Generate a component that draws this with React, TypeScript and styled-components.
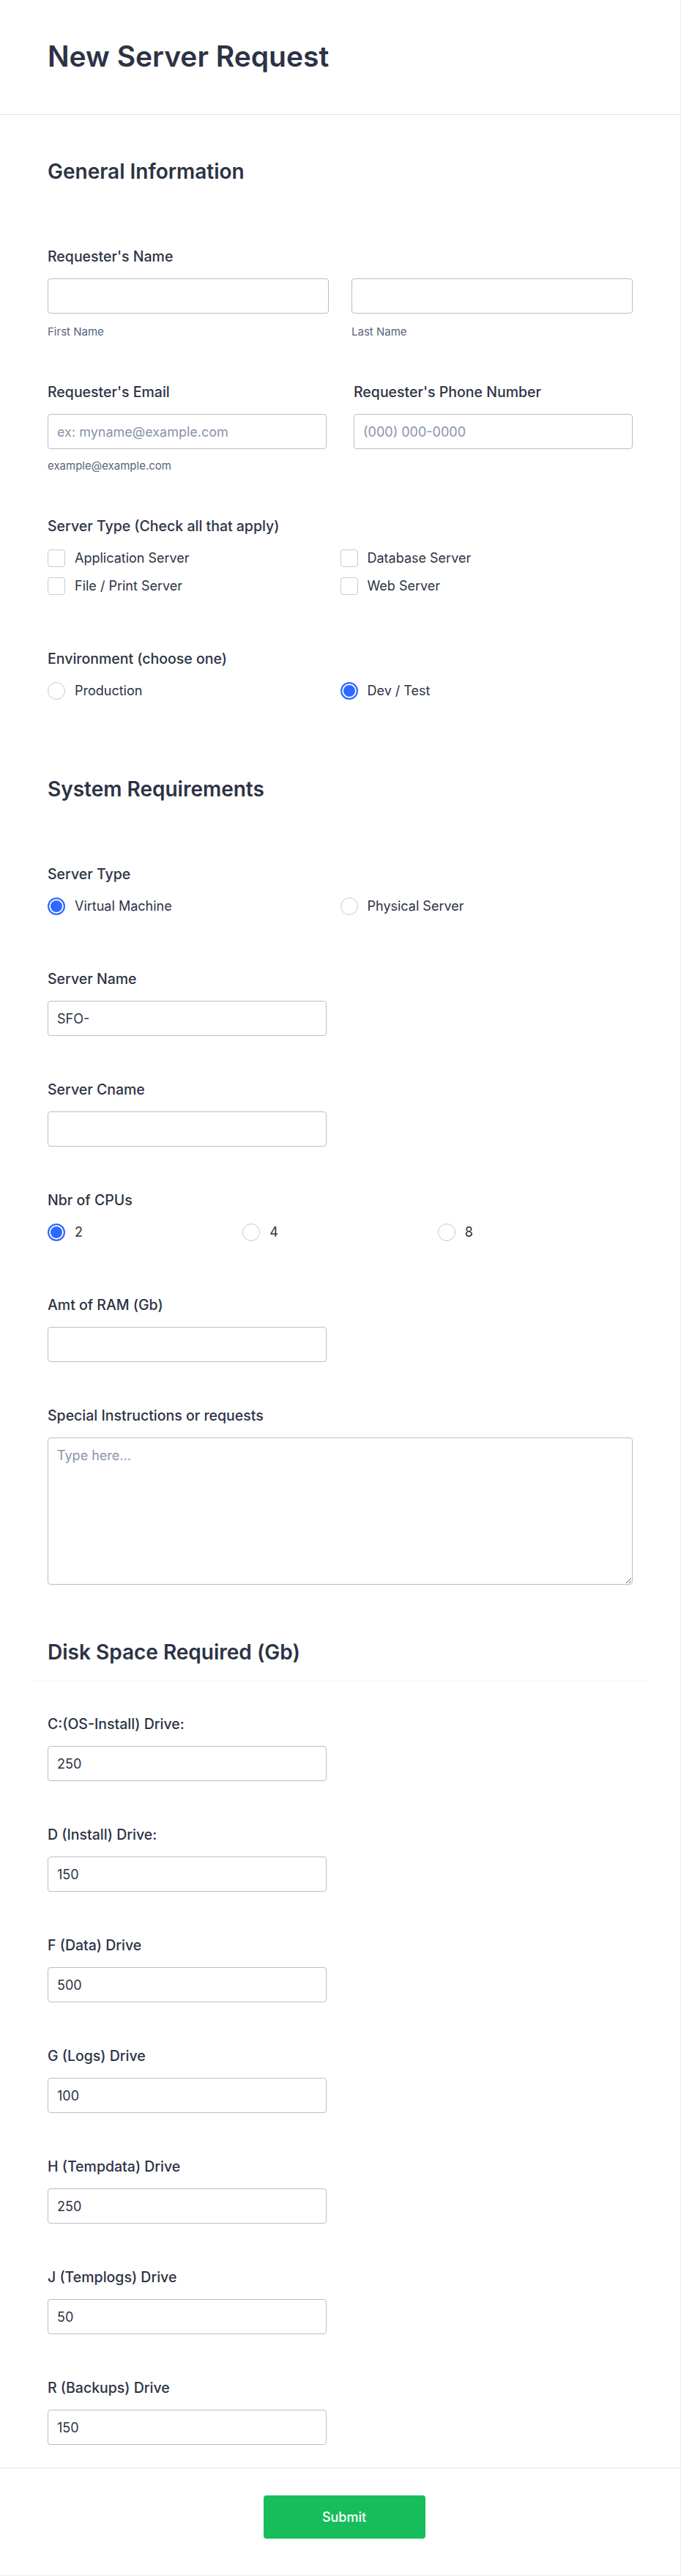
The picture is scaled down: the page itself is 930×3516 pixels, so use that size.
import React from 'react';
import styled, { createGlobalStyle, css } from 'styled-components';

const GlobalStyle = createGlobalStyle`
  * { box-sizing: border-box; }
  body {
    margin: 0;
    background: #ffffff;
    font-family: Inter, "Noto Sans", "Liberation Sans", sans-serif;
    color: #2c3345;
  }
`;

const drives = [
  { label: 'C:(OS-Install) Drive:', value: '250' },
  { label: 'D (Install) Drive:', value: '150' },
  { label: 'F (Data) Drive', value: '500' },
  { label: 'G (Logs) Drive', value: '100' },
  { label: 'H (Tempdata) Drive', value: '250' },
  { label: 'J (Templogs) Drive', value: '50' },
  { label: 'R (Backups) Drive', value: '150' },
];

function Check({ label }: { label: string }) {
  return (
    <Option>
      <CheckBox />
      <OptionText>{label}</OptionText>
    </Option>
  );
}

function Radio({ label, checked }: { label: string; checked?: boolean }) {
  return (
    <Option>
      <RadioDot $checked={!!checked} />
      <OptionText>{label}</OptionText>
    </Option>
  );
}

export default function App() {
  return (
    <>
      <GlobalStyle />
      <Page>
        <Header>
          <Title>New Server Request</Title>
        </Header>

        <Body>
          <SectionHeading>General Information</SectionHeading>

          <Field>
            <Label>Requester's Name</Label>
            <Row $gap={31}>
              <Column>
                <TextInput />
                <SubLabel>First Name</SubLabel>
              </Column>
              <Column>
                <TextInput />
                <SubLabel>Last Name</SubLabel>
              </Column>
            </Row>
          </Field>

          <Field>
            <Row $gap={37}>
              <Column>
                <Label>Requester's Email</Label>
                <TextInput placeholder="ex: myname@example.com" />
                <SubLabel $top={14}>example@example.com</SubLabel>
              </Column>
              <Column>
                <Label>Requester's Phone Number</Label>
                <TextInput placeholder="(000) 000-0000" />
              </Column>
            </Row>
          </Field>

          <Field>
            <Label $option>Server Type (Check all that apply)</Label>
            <OptionGrid $cols={2}>
              <Check label="Application Server" />
              <Check label="Database Server" />
              <Check label="File / Print Server" />
              <Check label="Web Server" />
            </OptionGrid>
          </Field>

          <Field>
            <Label $option>Environment (choose one)</Label>
            <OptionGrid $cols={2}>
              <Radio label="Production" />
              <Radio label="Dev / Test" checked />
            </OptionGrid>
          </Field>

          <SectionHeading>System Requirements</SectionHeading>

          <Field>
            <Label $option>Server Type</Label>
            <OptionGrid $cols={2}>
              <Radio label="Virtual Machine" checked />
              <Radio label="Physical Server" />
            </OptionGrid>
          </Field>

          <Field>
            <Label>Server Name</Label>
            <TextInput $narrow defaultValue="SFO-" />
          </Field>

          <Field>
            <Label>Server Cname</Label>
            <TextInput $narrow />
          </Field>

          <Field>
            <Label $option>Nbr of CPUs</Label>
            <OptionGrid $cols={3}>
              <Radio label="2" checked />
              <Radio label="4" />
              <Radio label="8" />
            </OptionGrid>
          </Field>

          <Field>
            <Label>Amt of RAM (Gb)</Label>
            <TextInput $narrow />
          </Field>

          <Field>
            <Label>Special Instructions or requests</Label>
            <TextArea placeholder="Type here..." />
          </Field>

          <SectionHeading $divider>Disk Space Required (Gb)</SectionHeading>

          {drives.map((d) => (
            <Field key={d.label}>
              <Label>{d.label}</Label>
              <TextInput $narrow defaultValue={d.value} />
            </Field>
          ))}
        </Body>

        <Footer>
          <SubmitButton type="button">Submit</SubmitButton>
        </Footer>
      </Page>
    </>
  );
}

const Page = styled.div`
  width: 930px;
  min-height: 3516px;
  border-right: 1px solid #eceef4;
  border-bottom: 1px solid #eceef4;
  background: #fff;
`;

const Header = styled.header`
  padding: 55px 65px 57px;
  border-bottom: 1px solid #dfe1ea;
`;

const Title = styled.h1`
  margin: 0;
  font-size: 39px;
  line-height: 44px;
  font-weight: 600;
  color: #2c3345;
`;

const Body = styled.main`
  padding: 0 65px;
`;

const SectionHeading = styled.h2<{ $divider?: boolean }>`
  margin: 0;
  padding: 61px 0 58px;
  font-size: 28px;
  line-height: 32px;
  font-weight: 600;
  color: #2c3345;
  ${(p) =>
    p.$divider &&
    css`
      padding: 45px 19px 23px;
      margin: 0 -18px 16px -19px;
      border-bottom: 1px solid #eef0f5;
    `}
`;

const Field = styled.section`
  padding: 30px 0 31px;
`;

const Label = styled.label<{ $option?: boolean }>`
  display: block;
  margin-bottom: ${(p) => (p.$option ? 20 : 18)}px;
  font-size: 19.5px;
  line-height: 24px;
  font-weight: 500;
  color: #2c3345;
`;

const Row = styled.div<{ $gap: number }>`
  display: grid;
  grid-template-columns: 1fr 1fr;
  column-gap: ${(p) => p.$gap}px;
`;

const Column = styled.div`
  display: flex;
  flex-direction: column;
`;

const inputBase = css`
  display: block;
  border: 1px solid #b8bdc9;
  border-radius: 4px;
  background: #fff;
  font-family: Inter, "Noto Sans", "Liberation Sans", sans-serif;
  font-size: 18px;
  color: #2c3345;
  padding: 0 12px;
  outline: none;
  &::placeholder {
    color: #8894ab;
  }
`;

const TextInput = styled.input<{ $narrow?: boolean }>`
  ${inputBase}
  width: ${(p) => (p.$narrow ? '381px' : '100%')};
  height: 48px;
`;

const TextArea = styled.textarea`
  ${inputBase}
  width: 100%;
  height: 201px;
  padding: 12px;
  line-height: 24px;
  resize: vertical;
`;

const SubLabel = styled.span<{ $top?: number }>`
  display: block;
  margin-top: ${(p) => p.$top ?? 16}px;
  font-size: 15px;
  line-height: 18px;
  color: #57647e;
`;

const OptionGrid = styled.div<{ $cols: number }>`
  display: grid;
  grid-template-columns: repeat(${(p) => p.$cols}, 1fr);
`;

const Option = styled.div`
  display: flex;
  align-items: flex-start;
  gap: 13px;
  height: 38px;
`;

const CheckBox = styled.span`
  flex: none;
  width: 24px;
  height: 24px;
  border: 1px solid #c3cad8;
  border-radius: 4px;
  background: #fff;
`;

const RadioDot = styled.span<{ $checked: boolean }>`
  flex: none;
  width: 24px;
  height: 24px;
  border-radius: 50%;
  border: 1px solid #c3cad8;
  background: #fff;
  ${(p) =>
    p.$checked &&
    css`
      border: 2px solid #2e69ff;
      background: #2e69ff;
      box-shadow: inset 0 0 0 2px #fff;
    `}
`;

const OptionText = styled.span`
  font-size: 18px;
  line-height: 24px;
  color: #2c3345;
`;

const Footer = styled.footer`
  display: flex;
  justify-content: center;
  padding: 37px 0 49px 11px;
  border-top: 1px solid #dfe1ea;
`;

const SubmitButton = styled.button`
  width: 221px;
  height: 59px;
  border: none;
  border-radius: 4px;
  background: #18bd5b;
  color: #fff;
  font-family: Inter, "Noto Sans", "Liberation Sans", sans-serif;
  font-size: 18px;
  font-weight: 500;
  cursor: pointer;
`;
